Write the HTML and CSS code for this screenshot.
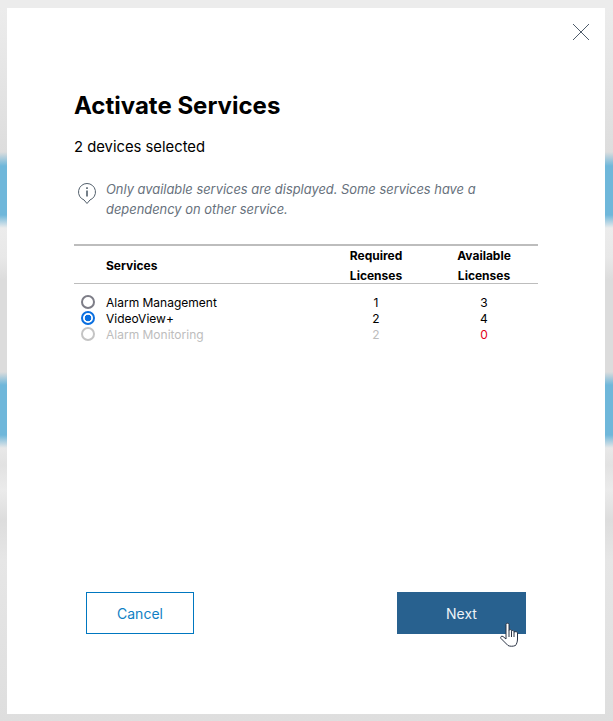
FILE: index.html
```html
<!DOCTYPE html>
<html lang="en">
<head>
    <meta charset="UTF-8">
    <title>Activate Services</title>
    <link rel="stylesheet" href="styles.css">
</head>
<body>
    <div class="modal">
        <button class="close-button" aria-label="Close">
            <svg width="18" height="18" viewBox="0 0 18 18"><path d="M1 1L17 17M17 1L1 17" stroke="#4f5c6b" stroke-width="1" fill="none"/></svg>
        </button>

        <h1 class="title">Activate Services</h1>
        <p class="subtitle">2 devices selected</p>

        <div class="info">
            <svg class="info-icon" width="20" height="23" viewBox="0 0 20 23" fill="none" stroke="#525f6b" stroke-width="1">
                <path d="M10 1.5a8.5 8.5 0 0 1 3 16.45L10 21.5l-3-3.55A8.5 8.5 0 0 1 10 1.5z"/>
                <path d="M10 8.5v6" stroke-width="1.6"/>
                <path d="M10 5.2v1.8" stroke-width="1.6"/>
            </svg>
            <p>Only available services are displayed. Some services have a dependency on other service.</p>
        </div>

        <div class="services">
            <div class="services-head">
                <div class="head-name">Services</div>
                <div class="head-num">Required<br>Licenses</div>
                <div class="head-num">Available<br>Licenses</div>
            </div>
            <div class="service-row">
                <span class="radio"></span>
                <span class="service-name">Alarm Management</span>
                <span class="num">1</span>
                <span class="num">3</span>
            </div>
            <div class="service-row">
                <span class="radio checked"></span>
                <span class="service-name">VideoView+</span>
                <span class="num">2</span>
                <span class="num">4</span>
            </div>
            <div class="service-row disabled">
                <span class="radio"></span>
                <span class="service-name">Alarm Monitoring</span>
                <span class="num">2</span>
                <span class="num none">0</span>
            </div>
        </div>

        <div class="actions">
            <button class="btn btn-cancel">Cancel</button>
            <button class="btn btn-next">Next
                <svg class="cursor" width="19" height="25" viewBox="0 0 19 25">
                    <path d="M6 2.500C6 .8 9 .8 9 2.500V8.500C9 7.200 11.500 7.200 11.500 8.800V9.500C11.500 8.200 14 8.200 14 9.800V10.500C14 9.300 17.500 9.300 17.500 11V17C17.500 20 16.500 22 15.500 23.500C13 24.500 10 24.500 8 23.500L1 16.500C0 15 1.500 13.500 3 14.500L6 17Z" fill="#fff" stroke="#2b3445" stroke-width="1"/>
                    <path d="M9 8.500V15M11.500 9.500V15M14 10.500V15" stroke="#2b3445" stroke-width="1" fill="none"/>
                </svg>
            </button>
        </div>
    </div>
</body>
</html>
```

FILE: styles.css
```css
html, body {
    height: 100%;
}

body {
    margin: 0;
    box-sizing: border-box;
    padding: 8px 8px 7px 7px;
    font-family: Inter, "Open Sans", sans-serif;
    color: #000;
    background: linear-gradient(to bottom,
        #ececec 0, #ececec 8px,
        #dddddd 152px,
        #6fb7da 166px, #6fb7da 215px,
        #ececec 228px, #e8e8e8 258px,
        #dcdcdc 280px, #dcdcdc 372px,
        #6fb7da 385px, #6fb7da 435px,
        #e8e8e8 448px, #e2e2e2 465px, #ebebeb 490px,
        #dddddd 520px, #e6e6e6 560px,
        #dedede 721px);
}

.modal {
    position: relative;
    box-sizing: border-box;
    height: 706px;
    background-color: white;
    padding: 85px 67px 0 67px;
}

.close-button {
    position: absolute;
    top: 15px;
    right: 15px;
    padding: 0;
    width: 18px;
    height: 18px;
    border: none;
    background: none;
}

.title {
    margin: 0;
    font-size: 24px;
    line-height: 26px;
    font-weight: 700;
}

.subtitle {
    margin: 16px 0 0 0;
    font-size: 14.8px;
    line-height: 24px;
}

/* Info note */
.info {
    display: flex;
    gap: 9px;
    margin: 21px 0 0 3px;
    width: 410px;
}

.info-icon {
    flex: none;
    margin-top: 2px;
}

.info p {
    margin: 0;
    font-size: 12.9px;
    font-style: italic;
    line-height: 20px;
    color: #67717c;
}

/* Services table */
.services {
    width: 464px;
    margin-top: 24px;
    font-size: 12px;
}

.services-head {
    display: grid;
    grid-template-columns: 248px 108px 108px;
    align-items: center;
    box-sizing: border-box;
    height: 40px;
    border-top: 2px solid #bdbdbd;
    border-bottom: 1px solid #bdbdbd;
    font-weight: 700;
    margin-bottom: 10px;
}

.head-name {
    padding: 0 0 2px 32px;
}

.head-num {
    text-align: center;
    line-height: 20px;
}

.service-row {
    display: grid;
    grid-template-columns: 32px 216px 108px 108px;
    align-items: center;
    height: 16px;
}

.service-row.disabled {
    color: #bdbdbd;
}

.radio {
    box-sizing: border-box;
    width: 14px;
    height: 14px;
    margin-left: 7px;
    border: 2px solid #7d7d87;
    border-radius: 50%;
}

.radio.checked {
    border-color: #0a6fe0;
    background: radial-gradient(circle, #0a6fe0 0, #0a6fe0 3px, white 3.6px);
}

.disabled .radio {
    border-color: #c4c4c4;
}

.num {
    text-align: center;
}

.num.none {
    color: #e2001a;
}

/* Buttons */
.actions {
    position: absolute;
    left: 79px;
    right: 79px;
    top: 584px;
    display: flex;
    justify-content: space-between;
}

.btn {
    box-sizing: border-box;
    height: 42px;
    font-family: inherit;
    font-size: 14px;
    padding: 0;
    border-radius: 0;
}

.btn-cancel {
    width: 108px;
    border: 1px solid #0077c0;
    background-color: white;
    color: #0f7fc4;
}

.btn-next {
    position: relative;
    width: 129px;
    border: none;
    background-color: #28618f;
    color: #eef3f7;
}

.cursor {
    position: absolute;
    left: 103px;
    top: 30px;
}
```
